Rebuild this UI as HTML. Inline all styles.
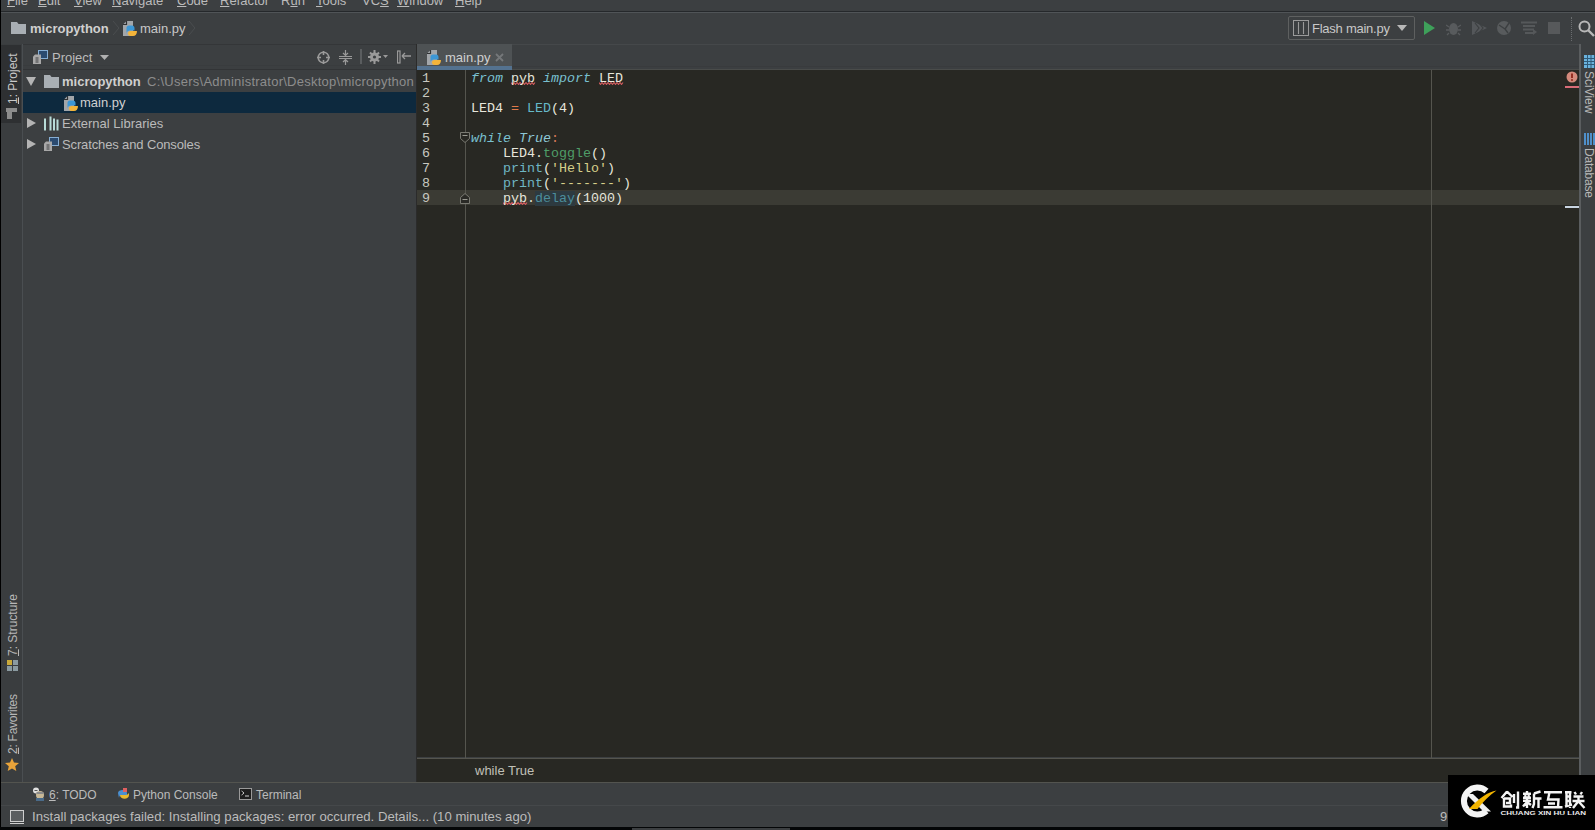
<!DOCTYPE html>
<html><head><meta charset="utf-8">
<style>
*{margin:0;padding:0;box-sizing:border-box}
html,body{width:1595px;height:830px;overflow:hidden;background:#3c3f41}
body{position:relative;font-family:"Liberation Sans",sans-serif;font-size:13px;color:#bbbbbb}
.a{position:absolute}
.t{position:absolute;white-space:pre;line-height:1}
.code{font-family:"Liberation Mono",monospace;font-size:13.33px}
.sq{text-decoration:underline wavy #c9564a;text-decoration-thickness:1px;text-underline-offset:2px}
u{text-decoration:underline;text-underline-offset:1px;text-decoration-thickness:1px}
</style></head><body>

<!-- left black border -->
<div class="a" style="left:0;top:0;width:1px;height:830px;background:#000"></div>

<!-- MENU BAR -->
<div class="a" id="menu" style="left:1px;top:0;width:1594px;height:11px;background:#3c3f41"></div>
<div class="a" style="left:1px;top:11px;width:1594px;height:1px;background:#25282b"></div>
<div class="a" style="left:1px;top:12px;width:1594px;height:1px;background:#505457"></div>


<!-- menu text -->
<div class="t" style="left:7px;top:-6px;color:#bbbbbb"><u>F</u>ile</div>
<div class="t" style="left:38px;top:-6px;color:#bbbbbb"><u>E</u>dit</div>
<div class="t" style="left:74px;top:-6px;color:#bbbbbb"><u>V</u>iew</div>
<div class="t" style="left:112px;top:-6px;color:#bbbbbb"><u>N</u>avigate</div>
<div class="t" style="left:177px;top:-6px;color:#bbbbbb"><u>C</u>ode</div>
<div class="t" style="left:220px;top:-6px;color:#bbbbbb"><u>R</u>efactor</div>
<div class="t" style="left:281px;top:-6px;color:#bbbbbb">R<u>u</u>n</div>
<div class="t" style="left:316px;top:-6px;color:#bbbbbb"><u>T</u>ools</div>
<div class="t" style="left:362px;top:-6px;color:#bbbbbb">VC<u>S</u></div>
<div class="t" style="left:397px;top:-6px;color:#bbbbbb"><u>W</u>indow</div>
<div class="t" style="left:455px;top:-6px;color:#bbbbbb"><u>H</u>elp</div>

<!-- NAV BAR -->
<div class="a" id="nav" style="left:1px;top:13px;width:1594px;height:31px;background:#3c3f41"></div>


<!-- nav content -->
<svg class="a" style="left:11px;top:21px" width="15" height="13" viewBox="0 0 15 13"><path d="M0 1h6l1.5 2H15v10H0z" fill="#a9afb4"/></svg>
<div class="t" style="left:30px;top:22px;font-weight:bold;color:#d0d0d0">micropython</div>
<svg class="a" style="left:112px;top:20px" width="8" height="16" viewBox="0 0 8 16"><path d="M1 1l6 7-6 7" fill="none" stroke="#4a4d4f" stroke-width="1"/></svg>
<svg class="a" style="left:122px;top:20px" width="16" height="17" viewBox="0 0 16 17"><path d="M1 4.5L4.5 1H11v15H1z" fill="#a2a6aa"/><path d="M1 4.5H4.5V1" fill="none" stroke="#303234" stroke-width="1.2"/><path d="M4.5 8c0-1.5 1-2.5 2.5-2.5h3c1.5 0 2.5 1 2.5 2.5v2.5H8c-1.5 0-3.5 1-3.5 3z" fill="#3c97d6"/><path d="M15 11c0 3-1.5 5-4 5H8.5c-1.5 0-2.5-1-2.5-2.5 0-1.5 1-2.5 2.5-2.5H15z" fill="#f3b43a"/></svg>
<div class="t" style="left:140px;top:22px;color:#c8c8c8">main.py</div>
<svg class="a" style="left:188px;top:20px" width="8" height="16" viewBox="0 0 8 16"><path d="M1 1l6 7-6 7" fill="none" stroke="#4a4d4f" stroke-width="1"/></svg>

<!-- run config -->
<div class="a" style="left:1288px;top:16px;width:127px;height:24px;border:1px solid #5e6060;border-radius:2px;background:#3c3f41"></div>
<svg class="a" style="left:1293px;top:20px" width="16" height="16" viewBox="0 0 16 16"><rect x="0.5" y="0.5" width="15" height="15" fill="none" stroke="#9a9a9a"/><path d="M5.5 2v12M10.5 2v12" stroke="#9a9a9a" stroke-width="1.1"/></svg>
<div class="t" style="left:1312px;top:22px;color:#c8c8c8;letter-spacing:-0.25px">Flash main.py</div>
<svg class="a" style="left:1397px;top:25px" width="10" height="6" viewBox="0 0 10 6"><path d="M0 0h10L5 6z" fill="#b8b8b8"/></svg>
<svg class="a" style="left:1423px;top:20px" width="13" height="16" viewBox="0 0 13 16"><path d="M1 1l11 7-11 7z" fill="#3ea05a"/></svg>
<svg class="a" style="left:1446px;top:20px" width="15" height="16" viewBox="0 0 15 16"><ellipse cx="7.5" cy="9" rx="4.5" ry="6" fill="#585b5d"/><path d="M0 5l3 2M15 5l-3 2M0 10h3M12 10h3M1 15l2-2M14 15l-2-2" stroke="#585b5d" stroke-width="1.3"/></svg>
<svg class="a" style="left:1471px;top:20px" width="17" height="16" viewBox="0 0 17 16"><path d="M1 1l15 7-15 7z" fill="#54575a"/><path d="M4 3l4 5-4 5M8 3l4 5-4 5" stroke="#3c3f41" stroke-width="1.2" fill="none"/></svg>
<svg class="a" style="left:1496px;top:20px" width="16" height="16" viewBox="0 0 16 16"><circle cx="8" cy="8" r="7" fill="#585b5d"/><path d="M3 5l6 4M13 3L9 9l3 4" stroke="#3c3f41" stroke-width="1.4" fill="none"/></svg>
<svg class="a" style="left:1521px;top:21px" width="17" height="15" viewBox="0 0 17 15"><path d="M0 1.5h16M2 5h12M2 8.5h11M4 12h8" stroke="#55585a" stroke-width="2"/><path d="M12 8l4 3-4 3z" fill="#55585a"/></svg>
<div class="a" style="left:1548px;top:22px;width:12px;height:12px;background:#57595b"></div>
<div class="a" style="left:1571px;top:17px;width:1px;height:24px;border-left:1px dotted #6a6d6f"></div>
<svg class="a" style="left:1578px;top:20px" width="17" height="17" viewBox="0 0 17 17"><circle cx="6.5" cy="6.5" r="5" fill="none" stroke="#b8b8b8" stroke-width="2"/><path d="M10 10l6 6" stroke="#b8b8b8" stroke-width="2.4"/></svg>

<!-- LEFT STRIP -->
<div class="a" style="left:1px;top:44px;width:21px;height:739px;background:#3a3d3f"></div>
<div class="a" style="left:22px;top:44px;width:1px;height:739px;background:#4a4e51"></div>


<!-- left strip content -->
<div class="a" style="left:1px;top:45px;width:20px;height:78px;background:#2e3032"></div>
<div class="t" style="left:7px;top:104px;transform-origin:0 0;transform:rotate(-90deg);font-size:12px;color:#c8c8c8"><u>1</u>: Project</div>
<svg class="a" style="left:6px;top:108px" width="12" height="11" viewBox="0 0 12 11"><path d="M0 0h11v4H6v7H1V4H0z" fill="#8c8c8c"/></svg>
<div class="t" style="left:7px;top:656px;transform-origin:0 0;transform:rotate(-90deg);font-size:12px;color:#b8b8b8"><u>7</u>: Structure</div>
<svg class="a" style="left:7px;top:660px" width="12" height="11" viewBox="0 0 12 11"><rect x="0" y="0" width="5" height="5" fill="#c9a93a"/><rect x="6" y="0" width="5" height="5" fill="#8a9aa0"/><rect x="0" y="6" width="5" height="5" fill="#8a9aa0"/><rect x="6" y="6" width="5" height="5" fill="#8a9aa0"/></svg>
<div class="t" style="left:7px;top:754px;transform-origin:0 0;transform:rotate(-90deg);font-size:12px;letter-spacing:-0.25px;color:#b8b8b8"><u>2</u>: Favorites</div>
<svg class="a" style="left:5px;top:758px" width="14" height="13" viewBox="0 0 14 13"><path d="M7 0l2 4.5 5 .5-3.8 3.3L11.3 13 7 10.5 2.7 13l1.1-4.7L0 5l5-.5z" fill="#e8a33a"/></svg>

<!-- PROJECT PANEL -->
<div class="a" id="proj" style="left:23px;top:44px;width:393px;height:739px;background:#3c3f41"></div>
<div class="a" style="left:23px;top:44px;width:393px;height:1px;background:#343638"></div>
<div class="a" style="left:23px;top:65px;width:393px;height:1px;background:#393c3e"></div>
<div class="a" style="left:23px;top:69px;width:393px;height:1px;background:#323436"></div>
<div class="a" style="left:23px;top:92px;width:393px;height:21px;background:#0d293e"></div>
<div class="a" style="left:416px;top:44px;width:1px;height:739px;background:#2b2b2b"></div>

<!-- project header -->
<svg class="a" style="left:33px;top:50px" width="15" height="14" viewBox="0 0 15 14"><rect x="5.5" y="0.5" width="9" height="8" fill="#2b4b70" stroke="#86aed4"/><path d="M0 6.5L2 4.5H8V14H0z" fill="#a8a8a8"/><path d="M2.5 8h3M2.5 10h3M2.5 12h3" stroke="#3c3f41" stroke-width="1"/></svg>
<div class="t" style="left:52px;top:51px;color:#bbbbbb">Project</div>
<svg class="a" style="left:100px;top:55px" width="9" height="5" viewBox="0 0 9 5"><path d="M0 0h9L4.5 5z" fill="#b0b0b0"/></svg>
<svg class="a" style="left:317px;top:51px" width="13" height="13" viewBox="0 0 13 13"><circle cx="6.5" cy="6.5" r="5.3" fill="none" stroke="#9a9a9a" stroke-width="1.6"/><path d="M6.5 0v4M6.5 9v4M0 6.5h4M9 6.5h4" stroke="#9a9a9a" stroke-width="1.6"/></svg>
<svg class="a" style="left:339px;top:50px" width="13" height="15" viewBox="0 0 13 15"><path d="M0 6.5h13M0 8.5h13M6.5 0v5M6.5 10v5M4 3l2.5 2.5L9 3M4 12l2.5-2.5L9 12" stroke="#9a9a9a" stroke-width="1.2" fill="none"/></svg>
<div class="a" style="left:360px;top:49px;width:2px;height:15px;background:#5a5d5f"></div>
<svg class="a" style="left:368px;top:50px" width="20" height="14" viewBox="0 0 20 14"><circle cx="6.5" cy="7" r="4.5" fill="#9a9a9a"/><path d="M6.5 0v14M0 7h13M2 2.5l9 9M11 2.5l-9 9" stroke="#9a9a9a" stroke-width="2"/><circle cx="6.5" cy="7" r="1.6" fill="#3c3f41"/><path d="M15 5h5l-2.5 3z" fill="#9a9a9a"/></svg>
<svg class="a" style="left:397px;top:50px" width="14" height="14" viewBox="0 0 14 14"><rect x="0.5" y="1" width="2.5" height="12" fill="none" stroke="#9a9a9a" stroke-width="1.2"/><path d="M5 6h9M5 6l3-3M5 6l3 3" stroke="#9a9a9a" stroke-width="1.3" fill="none"/></svg>

<!-- tree -->
<svg class="a" style="left:26px;top:77px" width="10" height="9" viewBox="0 0 10 9"><path d="M0 0h10L5 9z" fill="#b4b4b4"/></svg>
<svg class="a" style="left:44px;top:75px" width="15" height="13" viewBox="0 0 15 13"><path d="M0 0h6l1.5 2H15v11H0z" fill="#a9afb4"/></svg>
<div class="t" style="left:62px;top:75px;font-weight:bold;color:#cfcfcf">micropython</div>
<div class="t" style="left:147px;top:75px;color:#8d8d8d;letter-spacing:0.25px">C:\Users\Administrator\Desktop\micropython</div>
<svg class="a" style="left:63px;top:95px" width="16" height="17" viewBox="0 0 16 17"><path d="M1 4.5L4.5 1H11v15H1z" fill="#a2a6aa"/><path d="M1 4.5H4.5V1" fill="none" stroke="#303234" stroke-width="1.2"/><path d="M4.5 8c0-1.5 1-2.5 2.5-2.5h3c1.5 0 2.5 1 2.5 2.5v2.5H8c-1.5 0-3.5 1-3.5 3z" fill="#3c97d6"/><path d="M15 11c0 3-1.5 5-4 5H8.5c-1.5 0-2.5-1-2.5-2.5 0-1.5 1-2.5 2.5-2.5H15z" fill="#f3b43a"/></svg>
<div class="t" style="left:80px;top:96px;color:#d0d0d0">main.py</div>
<svg class="a" style="left:27px;top:118px" width="9" height="10" viewBox="0 0 9 10"><path d="M0 0v10l9-5z" fill="#b4b4b4"/></svg>
<svg class="a" style="left:44px;top:116px" width="15" height="15" viewBox="0 0 15 15"><path d="M1 2.5v12M6.5 0.5v14M10 2.5v12M13.5 3.5v11" stroke="#b8dcd8" stroke-width="2"/></svg>
<div class="t" style="left:62px;top:117px;color:#bbbbbb">External Libraries</div>
<svg class="a" style="left:27px;top:139px" width="9" height="10" viewBox="0 0 9 10"><path d="M0 0v10l9-5z" fill="#b4b4b4"/></svg>
<svg class="a" style="left:44px;top:137px" width="15" height="14" viewBox="0 0 15 14"><rect x="5.5" y="0.5" width="9" height="8" fill="#2b4b70" stroke="#86aed4"/><path d="M0 6.5L2 4.5H8V14H0z" fill="#a8a8a8"/><path d="M2.5 8h3M2.5 10h3M2.5 12h3" stroke="#3c3f41" stroke-width="1"/></svg>
<div class="t" style="left:62px;top:138px;color:#bbbbbb;letter-spacing:-0.13px">Scratches and Consoles</div>


<!-- EDITOR -->
<div class="a" style="left:417px;top:44px;width:1163px;height:25px;background:#3c3f41"></div>
<div class="a" style="left:417px;top:44px;width:1162px;height:1px;background:#45484a"></div>
<div class="a" style="left:417px;top:66px;width:1162px;height:1px;background:#393b3d"></div>
<div class="a" style="left:417px;top:69px;width:1162px;height:1px;background:#4a4c4a"></div>
<div class="a" style="left:417px;top:44px;width:95px;height:22px;background:#4e5254"></div>
<div class="a" style="left:417px;top:66px;width:95px;height:4px;background:#54728f"></div>
<div class="a" id="ed" style="left:417px;top:70px;width:1162px;height:687px;background:#282823"></div>
<div class="a" style="left:417px;top:190px;width:1162px;height:15px;background:#3b3b34"></div>
<div class="a" style="left:465px;top:70px;width:1px;height:688px;background:#55554e"></div>
<div class="a" style="left:1431px;top:70px;width:1px;height:688px;background:#55554e"></div>
<div class="a" style="left:417px;top:758px;width:1162px;height:1px;background:#55554e"></div>
<div class="a" style="left:417px;top:759px;width:1162px;height:23px;background:#282823"></div>
<div class="a" style="left:1579px;top:44px;width:2px;height:739px;background:#5a5d5f"></div>

<!-- RIGHT STRIP -->
<div class="a" style="left:1581px;top:44px;width:14px;height:739px;background:#3c3f41"></div>

<!-- BOTTOM TOOLBAR -->
<div class="a" style="left:1px;top:782px;width:1594px;height:1px;background:#53544f"></div>
<div class="a" style="left:1px;top:783px;width:1594px;height:22px;background:#3c3f41"></div>
<div class="a" style="left:1px;top:805px;width:1594px;height:1px;background:#45484a"></div>
<!-- STATUS BAR -->
<div class="a" style="left:1px;top:806px;width:1594px;height:21px;background:#3c3f41"></div>
<div class="a" style="left:0;top:827px;width:1595px;height:3px;background:#040607"></div>
<div class="a" style="left:632px;top:828px;width:158px;height:2px;background:#3c3f41"></div>


<!-- tab -->
<svg class="a" style="left:426px;top:49px" width="16" height="17" viewBox="0 0 16 17"><path d="M1 4.5L4.5 1H11v15H1z" fill="#a2a6aa"/><path d="M1 4.5H4.5V1" fill="none" stroke="#303234" stroke-width="1.2"/><path d="M4.5 8c0-1.5 1-2.5 2.5-2.5h3c1.5 0 2.5 1 2.5 2.5v2.5H8c-1.5 0-3.5 1-3.5 3z" fill="#3c97d6"/><path d="M15 11c0 3-1.5 5-4 5H8.5c-1.5 0-2.5-1-2.5-2.5 0-1.5 1-2.5 2.5-2.5H15z" fill="#f3b43a"/></svg>
<div class="t" style="left:445px;top:51px;color:#d0d0d0">main.py</div>
<svg class="a" style="left:495px;top:53px" width="9" height="9" viewBox="0 0 9 9"><path d="M1 1l7 7M8 1L1 8" stroke="#75787a" stroke-width="1.8"/></svg>

<!-- gutter numbers -->
<div class="a code" style="left:422px;top:71px;line-height:15px;color:#c8c8c0;white-space:pre">1
2
3
4
5
6
7
8
9</div>
<!-- fold markers -->
<svg class="a" style="left:460px;top:132px" width="11" height="11" viewBox="0 0 11 11"><path d="M0.5 0.5h9v6l-4.5 4-4.5-4z" fill="#282823" stroke="#7a7a72"/><path d="M2.5 3.5h5" stroke="#9a9a92"/></svg>
<svg class="a" style="left:460px;top:193px" width="11" height="11" viewBox="0 0 11 11"><path d="M0.5 10.5h9v-6l-4.5-4-4.5 4z" fill="#2a2a26" stroke="#7a7a72"/><path d="M2.5 6.5h5" stroke="#9a9a92"/></svg>


<!-- squiggles -->
<svg class="a" style="left:511px;top:82px" width="26" height="3" viewBox="0 0 26 3"><polyline points="0,0.5 1.5,2.5 3.0,0.5 4.5,2.5 6.0,0.5 7.5,2.5 9.0,0.5 10.5,2.5 12.0,0.5 13.5,2.5 15.0,0.5 16.5,2.5 18.0,0.5 19.5,2.5 21.0,0.5 22.5,2.5 24.0,0.5" fill="none" stroke="#d25c5e" stroke-width="1.1"/></svg>
<svg class="a" style="left:599px;top:82px" width="26" height="3" viewBox="0 0 26 3"><polyline points="0,0.5 1.5,2.5 3.0,0.5 4.5,2.5 6.0,0.5 7.5,2.5 9.0,0.5 10.5,2.5 12.0,0.5 13.5,2.5 15.0,0.5 16.5,2.5 18.0,0.5 19.5,2.5 21.0,0.5 22.5,2.5 24.0,0.5" fill="none" stroke="#d25c5e" stroke-width="1.1"/></svg>
<svg class="a" style="left:503px;top:202px" width="26" height="3" viewBox="0 0 26 3"><polyline points="0,0.5 1.5,2.5 3.0,0.5 4.5,2.5 6.0,0.5 7.5,2.5 9.0,0.5 10.5,2.5 12.0,0.5 13.5,2.5 15.0,0.5 16.5,2.5 18.0,0.5 19.5,2.5 21.0,0.5 22.5,2.5 24.0,0.5" fill="none" stroke="#d25c5e" stroke-width="1.1"/></svg>

<!-- code -->
<div class="a code" style="left:471px;top:71px;line-height:15px;color:#e6e6dc;white-space:pre"><i style="color:#79c0d0">from</i> pyb <i style="color:#79c0d0">import</i> LED

LED4 <span style="color:#e07a4a">=</span> <span style="color:#66b9c9">LED</span>(4)

<i style="color:#79c0d0">while</i> <i style="color:#8cc7d6">True</i><span style="color:#d8785a">:</span>
    LED4.<span style="color:#4f9e68">toggle</span>()
    <span style="color:#6fb6c3">print</span>(<span style="color:#d6cf8a">'Hello'</span>)
    <span style="color:#6fb6c3">print</span>(<span style="color:#d6cf8a">'-------'</span>)
    pyb.<span style="color:#4c8d9b;background:#2d3a40">delay</span>(1000)</div>


<!-- error stripe -->
<svg class="a" style="left:1566px;top:71px" width="12" height="12" viewBox="0 0 12 12"><circle cx="6" cy="6" r="5.5" fill="#d48a7c"/><path d="M6 2.5v4.5" stroke="#8e2418" stroke-width="1.8"/><circle cx="6" cy="9" r="1" fill="#8e2418"/></svg>
<div class="a" style="left:1565px;top:86px;width:14px;height:2px;background:#d86c78"></div>
<div class="a" style="left:1565px;top:206px;width:14px;height:2px;background:#c8d4e0"></div>

<!-- breadcrumb bottom -->
<div class="t" style="left:475px;top:764px;color:#c0c0b8">while True</div>

<!-- right strip content -->
<svg class="a" style="left:1584px;top:55px" width="12" height="13" viewBox="0 0 12 13"><rect x="0" y="0" width="12" height="13" fill="#6ab2dc"/><path d="M0 3.5h12M0 6.5h12M0 9.5h12M3.5 0v13M7 0v13M10.5 0v13" stroke="#2f5a78" stroke-width="1"/></svg>
<div class="t" style="left:1595px;top:71px;transform-origin:0 0;transform:rotate(90deg);font-size:12px;color:#b8b8b8">SciView</div>
<svg class="a" style="left:1584px;top:132px" width="11" height="14" viewBox="0 0 11 14"><path d="M1 1v12M4 1v12M7 1v12M10 1v12" stroke="#4f8fc9" stroke-width="2"/></svg>
<div class="t" style="left:1595px;top:148px;transform-origin:0 0;transform:rotate(90deg);font-size:12px;letter-spacing:-0.2px;color:#b8b8b8">Database</div>

<!-- bottom toolbar -->
<svg class="a" style="left:32px;top:787px" width="14" height="14" viewBox="0 0 14 14"><circle cx="4" cy="3.5" r="3" fill="#e0e0e0"/><path d="M2.5 3.5h3" stroke="#555" stroke-width="1"/><circle cx="8" cy="8" r="4" fill="#c8b896"/><rect x="4" y="11" width="8" height="3" fill="#4a6b8a"/><path d="M4.5 6h7" stroke="#8a8a8a" stroke-width="2"/></svg>
<div class="t" style="left:49px;top:789px;font-size:12px;color:#bbbbbb"><u>6</u>: TODO</div>
<svg class="a" style="left:116px;top:787px" width="14" height="14" viewBox="0 0 14 14"><path d="M2 6c0-4 9-4 9 0v2H6c-2 0-3 1-3 3z" fill="#4a8fd0"/><path d="M13 8c0 5-9 5-9 0h6c1 0 2-1 3-2z" fill="#e8b92e"/><rect x="7" y="1" width="4" height="4" fill="#e06060"/></svg>
<div class="t" style="left:133px;top:789px;font-size:12px;color:#bbbbbb">Python Console</div>
<svg class="a" style="left:239px;top:788px" width="13" height="12" viewBox="0 0 13 12"><rect x="0.5" y="0.5" width="12" height="11" fill="#1e1e1e" stroke="#9a9a9a"/><path d="M2.5 3l2.5 2-2.5 2M6 8h4" stroke="#d0d0d0" stroke-width="1"/></svg>
<div class="t" style="left:256px;top:789px;font-size:12px;color:#bbbbbb">Terminal</div>

<!-- status bar -->
<div class="a" style="left:10px;top:810px;width:14px;height:12px;border:1px solid #cfcfcf;background:#5a5d5f"></div>
<div class="a" style="left:10px;top:823px;width:14px;height:1px;background:#cfcfcf"></div>
<div class="t" style="left:32px;top:810px;font-size:13.16px;color:#bbbbbb">Install packages failed: Installing packages: error occurred. Details... (10 minutes ago)</div>
<div class="t" style="left:1440px;top:810px;color:#bbbbbb">9</div>

<!-- watermark -->
<svg class="a" style="left:1448px;top:775px" width="147" height="55" viewBox="0 0 147 55">
<rect width="147" height="55" fill="#000"/>
<path d="M38.5 16 A13.5 13.5 0 1 0 38.5 36" fill="none" stroke="#f4f4f4" stroke-width="6"/>
<path d="M18 19h7l18 17.5h-7.5z" fill="#f0f0f0"/>
<path d="M21 34h8.5C35 27 41 20.5 48.5 15.5 40 17 31 23 21 34z" fill="#f2b400"/>
<g stroke="#f4f4f4" stroke-width="2.4" fill="none" stroke-linecap="butt">
<path d="M59 16.5L53.5 23M59 16.5L64.5 22M56 23.5h6v4.5h-4M56 23v8.5h7v-2M66 19v9M70 16.5v16h-2"/>
<path d="M79 16v2.5M75 18.8h8M77 20l.6 1.8M81 20l-.6 1.8M75 22.8h8M75 25.8h8M79 23v10M79 27l-4 4.5M79 27l4 3M92.5 16.5l-6.5 2M86 18.5V29l-1.5 4M86 23.5h7.5M90.5 23.5V33"/>
<path d="M96 17.2h18M95.5 32.3h19M101.5 17.2l-1.5 7.3h10.5l-.5 7.8M100 28.5h7"/>
<path d="M117 17.2h6.5M118.5 17v14M122 17v16M118.5 21.5h3.5M118.5 26h3.5M117 31.5l7-2M126.5 17l1.5 2.5M134 17l-1.5 2.5M125.5 21.5h10M124.5 26h12M130.5 21.5V26l-5.5 7M131 27l5.5 6"/>
</g>
<text x="52.5" y="39.8" font-family="Liberation Sans" font-size="6.2" font-weight="bold" fill="#e8e8e8" textLength="85.5" lengthAdjust="spacingAndGlyphs">CHUANG XIN HU LIAN</text>
</svg>

</body></html>
